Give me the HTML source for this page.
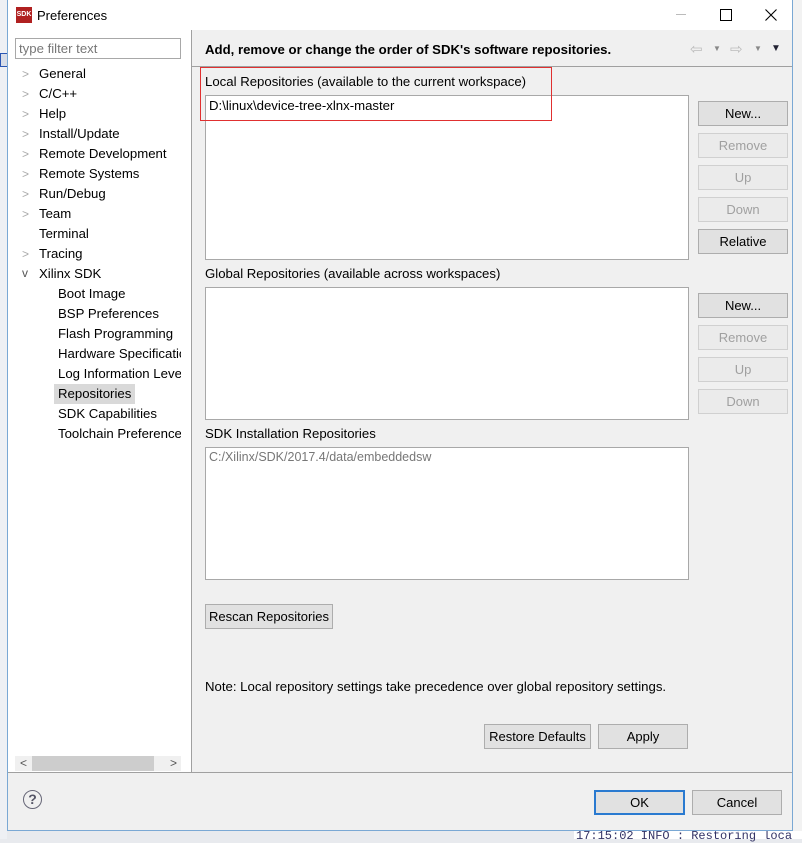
<!DOCTYPE html>
<html><head><meta charset="utf-8"><style>
body{margin:0;width:802px;height:839px;overflow:hidden;background:#e8eaee;font-family:"Liberation Sans",sans-serif;font-size:13.2px;color:#000;position:relative}
.a{position:absolute}
.btn{position:absolute;background:#e1e1e1;border:1px solid #adadad;box-sizing:border-box;text-align:center;font-size:13px;line-height:24px}
.dis{color:#a0a0a0;border-color:#d0d0d0;background:#ebebeb}
.box{position:absolute;background:#fff;border:1px solid #a8a8a8;box-sizing:border-box}
.t{position:absolute;left:39px;white-space:nowrap}
.s{position:absolute;left:58px;white-space:nowrap}
.ch{position:absolute;left:22px;color:#aaa;font-size:12px}
</style></head><body>
<div class="a" style="left:792px;top:0;width:10px;height:839px;background:#f2f2f2"></div>
<div class="a" style="left:574px;top:831px;width:228px;height:8px;background:#fff"></div>
<div class="a" style="left:576px;top:829px;font-family:'Liberation Mono';font-size:12px;color:#336">17:15:02 INFO  : Restoring loca</div>
<div class="a" style="left:0;top:0;width:7px;height:839px;background:#eef0f4"></div>
<div class="a" style="left:0;top:53px;width:8px;height:14px;background:#d8dde8;border:1px solid #2a56b4;box-sizing:border-box"></div>
<div class="a" style="left:7px;top:0;width:786px;height:831px;background:#f0f0f0;border:1px solid #7aa8d4;border-top:none;box-sizing:border-box"></div>
<div class="a" style="left:8px;top:0;width:784px;height:30px;background:#fff"></div>
<div class="a" style="left:16px;top:7px;width:16px;height:16px;background:#b02020;color:#fff;font-size:7px;font-weight:bold;line-height:16px;text-align:center">SDK</div>
<div class="a" style="left:37px;top:8px;font-size:13px">Preferences</div>
<div class="a" style="left:676px;top:14px;width:10px;height:1px;background:#bbb"></div>
<div class="a" style="left:720px;top:9px;width:10px;height:10px;border:1px solid #000"></div>
<svg class="a" style="left:765px;top:9px" width="12" height="12"><path d="M0.5 0.5L11.5 11.5M11.5 0.5L0.5 11.5" stroke="#000" stroke-width="1.1"/></svg>
<div class="a" style="left:8px;top:30px;width:183px;height:742px;background:#fff;border-right:1px solid #a0a0a0"></div>
<div class="a" style="left:15px;top:38px;width:166px;height:21px;border:1px solid #a8a8a8;box-sizing:border-box;background:#fff;color:#777;padding-left:3px;line-height:19px">type filter text</div>
<div class="ch" style="top:67px">&gt;</div><div class="t" style="top:66px">General</div>
<div class="ch" style="top:87px">&gt;</div><div class="t" style="top:86px">C/C++</div>
<div class="ch" style="top:107px">&gt;</div><div class="t" style="top:106px">Help</div>
<div class="ch" style="top:127px">&gt;</div><div class="t" style="top:126px">Install/Update</div>
<div class="ch" style="top:147px">&gt;</div><div class="t" style="top:146px">Remote Development</div>
<div class="ch" style="top:167px">&gt;</div><div class="t" style="top:166px">Remote Systems</div>
<div class="ch" style="top:187px">&gt;</div><div class="t" style="top:186px">Run/Debug</div>
<div class="ch" style="top:207px">&gt;</div><div class="t" style="top:206px">Team</div>
<div class="t" style="top:226px">Terminal</div>
<div class="ch" style="top:247px">&gt;</div><div class="t" style="top:246px">Tracing</div>
<div class="ch" style="top:266px;color:#555">v</div><div class="t" style="top:266px">Xilinx SDK</div>
<div style="position:absolute;left:8px;top:280px;width:173px;height:170px;overflow:hidden">
<div class="s" style="left:50px;top:6px">Boot Image</div>
<div class="s" style="left:50px;top:26px">BSP Preferences</div>
<div class="s" style="left:50px;top:46px">Flash Programming</div>
<div class="s" style="left:50px;top:66px">Hardware Specification</div>
<div class="s" style="left:50px;top:86px">Log Information Level</div>
<div class="a" style="left:46px;top:104px;width:81px;height:20px;background:#d9d9d9"></div>
<div class="s" style="left:50px;top:106px">Repositories</div>
<div class="s" style="left:50px;top:126px">SDK Capabilities</div>
<div class="s" style="left:50px;top:146px">Toolchain Preferences</div>
</div>
<div class="a" style="left:15px;top:756px;width:166px;height:15px;background:#f0f0f0"></div>
<div class="a" style="left:32px;top:756px;width:122px;height:15px;background:#cdcdcd"></div>
<div class="a" style="left:20px;top:756px;font-size:12px;color:#555;line-height:15px">&lt;</div>
<div class="a" style="left:170px;top:756px;font-size:12px;color:#555;line-height:15px">&gt;</div>
<div class="a" style="left:192px;top:66px;width:600px;height:1px;background:#a0a0a0"></div>
<div class="a" style="left:205px;top:42px;font-weight:bold">Add, remove or change the order of SDK's software repositories.</div>
<div class="a" style="left:690px;top:40px;color:#bbb;font-size:15px">⇦</div>
<div class="a" style="left:713px;top:44px;color:#888;font-size:8px">▼</div>
<div class="a" style="left:730px;top:40px;color:#bbb;font-size:15px">⇨</div>
<div class="a" style="left:754px;top:44px;color:#888;font-size:8px">▼</div>
<div class="a" style="left:771px;top:43px;color:#223;font-size:10px">▼</div>
<div class="a" style="left:205px;top:74px">Local Repositories (available to the current workspace)</div>
<div class="box" style="left:205px;top:95px;width:484px;height:165px"></div>
<div class="a" style="left:209px;top:98px">D:\linux\device-tree-xlnx-master</div>
<div class="a" style="left:200px;top:67px;width:352px;height:54px;border:1px solid #e03030;box-sizing:border-box"></div>
<div class="btn" style="left:698px;top:101px;width:90px;height:25px">New...</div>
<div class="btn dis" style="left:698px;top:133px;width:90px;height:25px">Remove</div>
<div class="btn dis" style="left:698px;top:165px;width:90px;height:25px">Up</div>
<div class="btn dis" style="left:698px;top:197px;width:90px;height:25px">Down</div>
<div class="btn" style="left:698px;top:229px;width:90px;height:25px">Relative</div>
<div class="a" style="left:205px;top:266px">Global Repositories (available across workspaces)</div>
<div class="box" style="left:205px;top:287px;width:484px;height:133px"></div>
<div class="btn" style="left:698px;top:293px;width:90px;height:25px">New...</div>
<div class="btn dis" style="left:698px;top:325px;width:90px;height:25px">Remove</div>
<div class="btn dis" style="left:698px;top:357px;width:90px;height:25px">Up</div>
<div class="btn dis" style="left:698px;top:389px;width:90px;height:25px">Down</div>
<div class="a" style="left:205px;top:426px">SDK Installation Repositories</div>
<div class="box" style="left:205px;top:447px;width:484px;height:133px"></div>
<div class="a" style="left:209px;top:450px;color:#777;font-size:12.5px">C:/Xilinx/SDK/2017.4/data/embeddedsw</div>
<div class="btn" style="left:205px;top:604px;width:128px;height:25px">Rescan Repositories</div>
<div class="a" style="left:205px;top:679px">Note: Local repository settings take precedence over global repository settings.</div>
<div class="btn" style="left:484px;top:724px;width:107px;height:25px">Restore Defaults</div>
<div class="btn" style="left:598px;top:724px;width:90px;height:25px">Apply</div>
<div class="a" style="left:8px;top:772px;width:784px;height:1px;background:#a0a0a0"></div>
<div class="a" style="left:23px;top:790px;width:19px;height:19px;border:1.5px solid #667;border-radius:50%;box-sizing:border-box;text-align:center;font-weight:bold;color:#556;line-height:17px;font-size:14px">?</div>
<div class="btn" style="left:594px;top:790px;width:91px;height:25px;border:2px solid #2a7ad0;line-height:21px">OK</div>
<div class="btn" style="left:692px;top:790px;width:90px;height:25px">Cancel</div>
</body></html>
